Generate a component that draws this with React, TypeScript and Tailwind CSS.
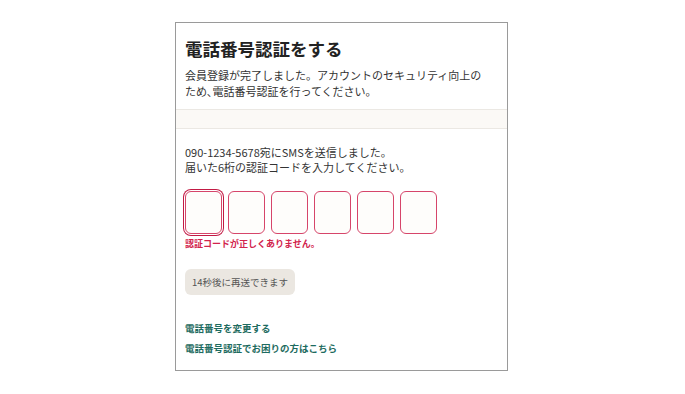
export default function App() {
  const boxes = [0, 1, 2, 3, 4, 5];
  return (
    <div
      className="w-[685px] h-[394px] bg-white pl-[175px] pt-[22px]"
      style={{ fontFamily: '"Noto Sans CJK JP", "Noto Sans", sans-serif' }}
    >
      <div className="w-[333px] h-[349px] border border-[#9a9a9a] bg-white flex flex-col">
        {/* ヘッダー */}
        <div className="px-[9px] pt-[13px] pb-[10px]">
          <h1 className="text-[17.5px] leading-[26px] font-bold text-[#222]">電話番号認証をする</h1>
          <p className="mt-[5px] text-[11px] leading-[16px] text-[#333]">
            会員登録が完了しました。アカウントのセキュリティ向上の
            <br />
            ため､電話番号認証を行ってください。
          </p>
        </div>
        <div className="h-[20px] bg-[#fbf9f6] border-y border-[#ebe8e3]" />

        {/* 本文 */}
        <div className="px-[9px] pt-[16px]">
          <p className="text-[11px] leading-[15px] text-[#333]">
            090-1234-5678宛にSMSを送信しました。
            <br />
            届いた6桁の認証コードを入力してください。
          </p>

          <div className="flex gap-[6px] mt-[16px]">
            {boxes.map((i) => (
              <div
                key={i}
                className={`w-[37px] h-[43px] rounded-[6px] bg-[#fefdfb] border border-[#d6456a] ${
                  i === 0 ? "ring-1 ring-offset-1 ring-[#c21a44] border-[#c21a44]" : ""
                }`}
              />
            ))}
          </div>
          <p className="mt-[3px] text-[9px] leading-[13px] font-bold text-[#d2234c]">認証コードが正しくありません。</p>

          <button
            type="button"
            className="mt-[19px] h-[26px] px-[7px] rounded-[6px] bg-[#ebe7e1] text-[9.5px] text-[#555]"
          >
            14秒後に再送できます
          </button>

          <div className="mt-[26px] flex flex-col gap-[6px]">
            <a className="text-[9.5px] leading-[14px] font-bold text-[#1d6b60]">電話番号を変更する</a>
            <a className="text-[9.5px] leading-[14px] font-bold text-[#1d6b60]">電話番号認証でお困りの方はこちら</a>
          </div>
        </div>
      </div>
    </div>
  );
}
